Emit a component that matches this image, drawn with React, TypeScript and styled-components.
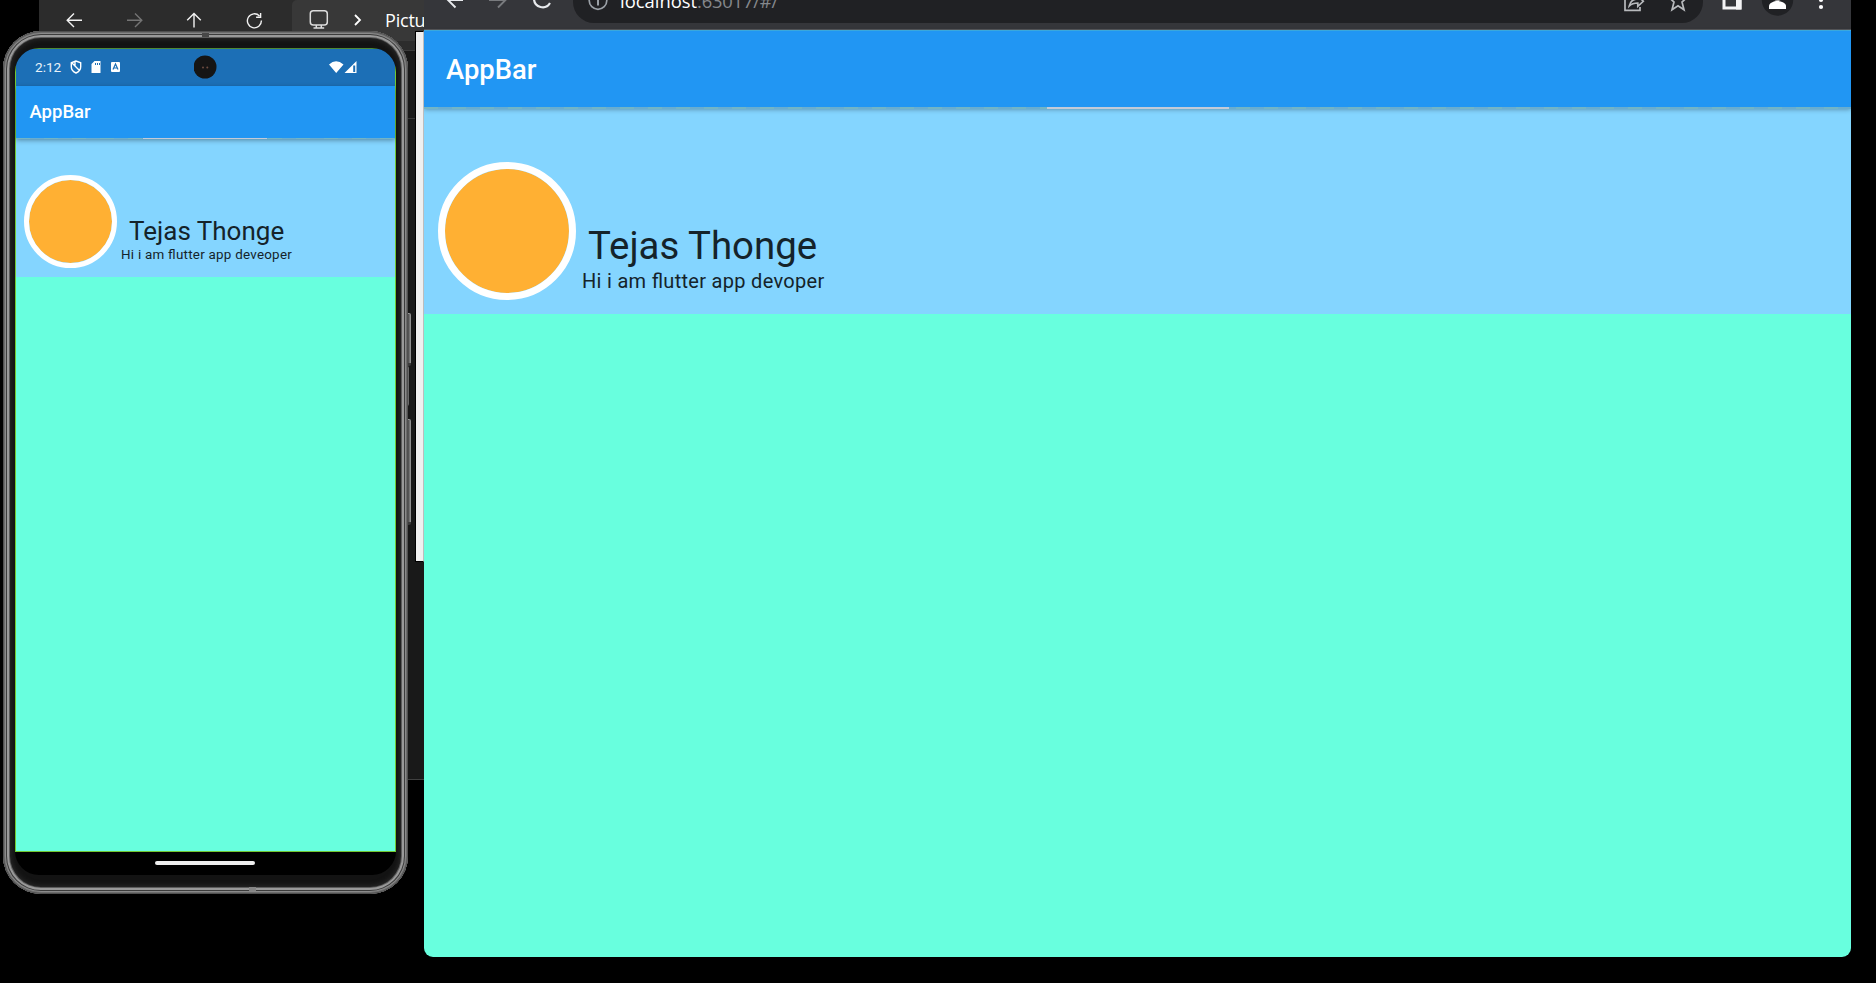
import React from "react";
import styled, { createGlobalStyle } from "styled-components";

const GlobalStyle = createGlobalStyle`
  *, *::before, *::after { box-sizing: border-box; }
  body { margin: 0; background: #000; overflow: hidden; font-family: Roboto, sans-serif; }
`;

const Desktop = styled.main`
  position: relative;
  width: 1876px;
  height: 983px;
  overflow: hidden;
  background: #000;
`;

/* File explorer */

const ExplorerWindow = styled.section`
  position: absolute;
  left: 39px;
  top: 0;
  width: 385px;
  height: 780px;
  display: flex;
  flex-direction: column;
  background: #191919;
  border-bottom: 1px solid #404040;
`;

const ExplorerToolbar = styled.div`
  flex: none;
  height: 51px;
  display: flex;
  background: #2c2c2c;
  border-bottom: 1px solid #3b3b3b;
`;

const ExplorerButtons = styled.div`
  width: 253px;
  padding: 10px 0 0 25px;
  display: flex;
  gap: 40px;
`;

const AddressField = styled.div`
  width: 132px;
  height: 41px;
  padding: 8px 0 0 17px;
  display: flex;
  overflow: hidden;
  background: #383838;
  border-top-left-radius: 5px;
  color: #fff;
  font: 18px/24px "Open Sans", sans-serif;
  letter-spacing: -0.2px;
`;

const FieldIcon = styled.svg`
  flex: none;
  margin-right: 20px;
`;

const FieldChevron = styled.svg`
  flex: none;
  margin: 4px 22px 0 4px;
`;

const ExplorerStrip = styled.div`
  height: 68px;
  border-bottom: 1px solid #383838;
`;

const PaperWindow = styled.div`
  position: absolute;
  left: 415px;
  top: 31px;
  width: 9px;
  height: 531px;
  background: #f0f0f0;
  border: 1px solid #000;
  border-right-color: #bdbdbd;
`;

/* Shared application parts */

const AppBar = styled.header<{ $height: number; $pad: string; $size: number }>`
  position: relative;
  z-index: 1;
  flex: none;
  height: ${(p) => p.$height}px;
  padding: ${(p) => p.$pad};
  display: flex;
  align-items: center;
  background: #2196f3;
  color: #fff;
  font-size: ${(p) => p.$size}px;
  font-weight: 500;
  box-shadow: 0 2px 5px rgba(0, 0, 0, 0.4);
`;

const Seam = styled.div<{ $height: number; $from: number; $width: number }>`
  position: absolute;
  left: 0;
  right: 0;
  top: 100%;
  height: ${(p) => p.$height}px;
  background: repeating-linear-gradient(90deg, #72b5c6 0 14px, #68add0 14px 28px);

  &::after {
    content: "";
    position: absolute;
    left: ${(p) => p.$from}px;
    width: ${(p) => p.$width}px;
    top: 0;
    bottom: 0;
    background: #c3cbd8;
  }
`;

const Profile = styled.section<{ $height: number; $pad: string }>`
  flex: none;
  height: ${(p) => p.$height}px;
  padding: ${(p) => p.$pad};
  display: flex;
  align-items: flex-start;
  background: #84d5ff;
  color: #14232a;
`;

const Avatar = styled.div<{ $size: number; $ring: number }>`
  flex: none;
  width: ${(p) => p.$size}px;
  height: ${(p) => p.$size}px;
  border: ${(p) => p.$ring}px solid #fff;
  border-radius: 50%;
  background: #ffb033;
  background-clip: padding-box;
`;

const Caption = styled.div<{ $pad: string }>`
  padding: ${(p) => p.$pad};
  white-space: nowrap;
`;

const Name = styled.div<{ $size: number; $indent: number; $line: number }>`
  padding-left: ${(p) => p.$indent}px;
  font-size: ${(p) => p.$size}px;
  line-height: ${(p) => p.$line}px;
`;

const Bio = styled.div<{ $size: number; $line: number; $spacing: number }>`
  font-size: ${(p) => p.$size}px;
  line-height: ${(p) => p.$line}px;
  letter-spacing: ${(p) => p.$spacing}px;
  font-feature-settings: "liga" 1;
`;

const Body = styled.div`
  flex: 1;
  background: #68ffde;
`;

/* Browser */

const BrowserWindow = styled.section`
  position: absolute;
  left: 424px;
  top: 0;
  width: 1427px;
  height: 957px;
  display: flex;
  flex-direction: column;
  overflow: hidden;
  border-radius: 0 0 9px 9px;
`;

const BrowserToolbar = styled.div`
  flex: none;
  height: 31px;
  display: flex;
  justify-content: space-between;
  background: #35363a;
  border-bottom: 1px solid #3fb4ec;
  box-shadow: inset 0 -1px 0 #56575a;
`;

const NavIcons = styled.svg`
  flex: none;
`;

const Omnibox = styled.div`
  flex: none;
  width: 1130px;
  height: 42px;
  margin-top: -19px;
  padding: 8px 14px 0 15px;
  display: flex;
  border-radius: 21px;
  background: #202124;
  color: #fff;
  font: 18.4px/24px "Open Sans", sans-serif;
`;

const Url = styled.div`
  flex: 1;
  margin-left: 12px;
`;

const UrlRest = styled.span`
  color: #85888c;
  letter-spacing: -0.2px;
`;

/* Phone */

const PhoneFrame = styled.section`
  position: absolute;
  left: 3px;
  top: 31px;
  width: 405px;
  height: 863px;
  padding: 17px 12px 19px;
  border-radius: 38px;
  background: #131313;
  box-shadow:
    inset 0 0 0 1px #505050,
    inset 0 0 0 2px #6c6c6c,
    inset 0 0 0 3px #8a8a8a,
    inset 0 0 0 4px #3c3c3c,
    inset 0 0 0 6px #999,
    inset 0 0 0 7px #5c5c5c,
    inset 0 0 5px 8px #2b2b2b;
`;

const PhoneScreen = styled.div`
  width: 381px;
  height: 827px;
  display: flex;
  flex-direction: column;
  overflow: hidden;
  border-radius: 24px;
  background: #000;
`;

const PhoneApp = styled.div`
  flex: none;
  height: 804px;
  display: flex;
  flex-direction: column;
  border: 1px solid #71c832;
  border-top-color: #4d8a35;
`;

const StatusBar = styled.div`
  flex: none;
  height: 37px;
  padding: 0 38px 1px 19px;
  display: grid;
  grid-template-columns: 159px 1fr auto;
  align-items: center;
  background: #1c6fb6;
  color: #e9f2f9;
  font-size: 13.6px;
`;

const StatusGroup = styled.div`
  display: flex;
  align-items: center;
  gap: 9px;
`;

const HomeArea = styled.div`
  flex: 1;
  display: flex;
  justify-content: center;
  padding: 9px 2px 0 0;
`;

const HomePill = styled.div`
  width: 100px;
  height: 4px;
  border-radius: 2px;
  background: #eee;
`;

const PhoneKey = styled.div<{ $top: number; $height: number; $wide?: boolean }>`
  position: absolute;
  left: 407px;
  top: ${(p) => p.$top}px;
  width: ${(p) => (p.$wide ? 4 : 2)}px;
  height: ${(p) => p.$height}px;
  border-radius: 0 2px 2px 0;
  background: ${(p) => (p.$wide ? "linear-gradient(90deg, #555 0 50%, #909090 75%)" : "#6a6a6a")};
  border-top: ${(p) => (p.$wide ? "1px solid #999" : "0")};
  border-bottom: ${(p) => (p.$wide ? "3px solid #3c3c3c" : "0")};
`;

const Antenna = styled.div<{ $left: number; $top: number; $tone: string }>`
  position: absolute;
  left: ${(p) => p.$left}px;
  top: ${(p) => p.$top}px;
  width: 7px;
  height: 4px;
  background: ${(p) => p.$tone};
`;

function Explorer() {
  return (
    <ExplorerWindow>
      <ExplorerToolbar>
        <ExplorerButtons>
          <svg width="20" height="20" fill="none" stroke="#f2f2f2" strokeWidth="1.4">
            <path d="M18 10.2H3.5M10 3.4 3.2 10.2 10 17" />
          </svg>
          <svg width="20" height="20" fill="none" stroke="#747474" strokeWidth="1.4">
            <path d="M3 10.2h14.5M11 3.4l6.8 6.8L11 17" />
          </svg>
          <svg width="20" height="20" fill="none" stroke="#f2f2f2" strokeWidth="1.4">
            <path d="M10 17.5V3.5M3.2 10.2 10 3.4l6.8 6.8" />
          </svg>
          <svg width="20" height="20" fill="none" stroke="#f2f2f2" strokeWidth="1.4">
            <path d="M15.5 6A7 7 0 1 0 17.4 10.5M16.6 3v4.3h-4.5" />
          </svg>
        </ExplorerButtons>
        <AddressField>
          <FieldIcon width="20" height="22" fill="none" stroke="#dcdcdc" strokeWidth="1.5">
            <rect x="1.3" y="2.8" width="17" height="14.3" rx="3" />
            <path d="M7.3 17v3M12.3 17v3M4.5 20h10.7" />
          </FieldIcon>
          <FieldChevron width="10" height="16" fill="none" stroke="#fff" strokeWidth="1.8">
            <path d="m2 3 5 5-5 5" />
          </FieldChevron>
          <span>Pictures</span>
        </AddressField>
      </ExplorerToolbar>
      <ExplorerStrip />
    </ExplorerWindow>
  );
}

function Browser() {
  return (
    <BrowserWindow>
      <BrowserToolbar>
        <NavIcons width="149" height="29" fill="none" strokeWidth="1.9">
          <path d="M39 0H23M31.5 7.5 23 -1l4-4" stroke="#e8eaed" />
          <path d="M65 0h16M74 7.5 82.5 -1l-4-4" stroke="#797b7e" />
          <path d="M110 -1a8.6 8.6 0 0 0 16 4" stroke="#e8eaed" strokeWidth="2.2" />
        </NavIcons>
        <Omnibox>
          <svg width="20" height="24" fill="none" stroke="#9aa0a6" strokeWidth="1.7">
            <circle cx="10" cy="11.5" r="8.8" />
            <path d="M10 10v6.5" strokeWidth="2" />
          </svg>
          <Url>
            localhost<UrlRest>:63017/#/</UrlRest>
          </Url>
          <svg width="66" height="24" fill="none" stroke="#b8babd" strokeWidth="1.7">
            <path d="M6.5 6H2v15.3h15V18M6.3 17c1-5 4-7 8.5-7V6.5l5.5 5.8-5.5 5V14c-3.5 0-6 .5-8.5 3Z" />
            <path d="m55 2.5 2.600 6h6.400l-5 4.500 2 7.700-6-4-6 4 2-7.700-5-4.500h6.400Z" />
          </svg>
        </Omnibox>
        <NavIcons width="148" height="29">
          <path d="M21 -8h16V8H21Z" stroke="#f4f4f5" strokeWidth="3" fill="none" />
          <path d="M33 -8h5.5V9.5h-5.5z" fill="#f4f4f5" />
          <circle cx="74.5" cy="0" r="15.7" fill="#202124" />
          <path d="M66 9V6c0-3 5-5 8.500-5s8.500 2 8.500 5v3Z" fill="#fff" />
          <circle cx="74.5" cy="-3" r="4" fill="#aaa" />
          <circle cx="118" cy="0" r="2.1" fill="#fff" />
          <circle cx="118" cy="7" r="2.1" fill="#fff" />
        </NavIcons>
      </BrowserToolbar>
      <AppBar $height={76} $pad="1px 0 0 22px" $size={27.4}>
        AppBar
        <Seam $height={2} $from={623} $width={182} />
      </AppBar>
      <Profile $height={206.5} $pad="55px 0 0 14px">
        <Avatar $size={138} $ring={7} />
        <Caption $pad="59px 0 0 6px">
          <Name $size={38.4} $indent={6} $line={50}>
            Tejas Thonge
          </Name>
          <Bio $size={20} $line={21} $spacing={0.3}>
            Hi i am flutter app devoper
          </Bio>
        </Caption>
      </Profile>
      <Body />
    </BrowserWindow>
  );
}

function Phone() {
  return (
    <>
      <PhoneKey $top={313} $height={53} $wide />
      <PhoneKey $top={366} $height={40} />
      <PhoneKey $top={419} $height={106} $wide />
      <PhoneFrame>
        <PhoneScreen>
          <PhoneApp>
            <StatusBar>
              <StatusGroup>
                <span>2:12</span>
                <svg width="12" height="14" fill="none" stroke="#fff" strokeWidth="1.4">
                  <path d="M6 1 1.3 2.8v4C1.3 10 3.5 12 6 13c2.5-1 4.7-3 4.7-6.2v-4ZM2 3l7.5 7.5M5 1.5v4" />
                </svg>
                <svg width="10" height="14" fill="#fff">
                  <path d="M3.5 1H9.5v12H.5V4ZM4 3v2h1V3Zm2 0v2h1V3Zm2 0v2h1V3Z" fillRule="evenodd" />
                </svg>
                <svg width="11" height="14">
                  <rect x="1" y="2" width="9" height="10" rx="1" fill="#fff" />
                  <path d="M3 9.5 5.5 4 8 9.5M4 8h3" stroke="#1c6fb6" strokeWidth="1.2" fill="none" />
                </svg>
              </StatusGroup>
              <svg width="24" height="24">
                <circle cx="11" cy="12" r="11.5" fill="#151515" />
                <circle cx="9" cy="12.5" r="1" fill="#6e4d42" />
                <circle cx="13.3" cy="12.5" r="1" fill="#6e4d42" />
              </svg>
              <svg width="28" height="14" fill="#fff">
                <path d="M0 4.5Q7 -2 14.5 4.5L7.2 13ZM27.5 1v12H15.5Z" />
                <path d="M24.2 5.5h2v6.5h-2z" fill="#1c6fb6" />
              </svg>
            </StatusBar>
            <AppBar $height={52} $pad="0 0 0 13.5px" $size={18.5}>
              AppBar
              <Seam $height={1} $from={127} $width={124} />
            </AppBar>
            <Profile $height={139} $pad="37px 0 0 8px">
              <Avatar $size={93} $ring={5} />
              <Caption $pad="38px 0 0 4px">
                <Name $size={26} $indent={8} $line={36}>
                  Tejas Thonge
                </Name>
                <Bio $size={13.4} $line={12} $spacing={0.25}>
                  Hi i am flutter app deveoper
                </Bio>
              </Caption>
            </Profile>
            <Body />
          </PhoneApp>
          <HomeArea>
            <HomePill />
          </HomeArea>
        </PhoneScreen>
      </PhoneFrame>
      <Antenna $left={202} $top={33} $tone="#484848" />
      <Antenna $left={249} $top={887} $tone="#858585" />
    </>
  );
}

export default function App() {
  return (
    <>
      <GlobalStyle />
      <Desktop>
        <Explorer />
        <PaperWindow />
        <Phone />
        <Browser />
      </Desktop>
    </>
  );
}
